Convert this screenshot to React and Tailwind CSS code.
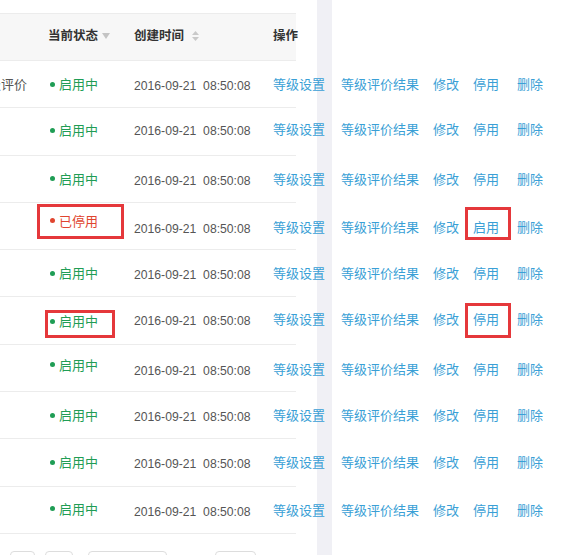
import React from "react";

const rows = [
  { on: true, lead: "级评价", st: "pt-[14px]", dt: "pt-[16px]" },
  { on: true, st: "pt-[13px]", dt: "pt-[14px]" },
  { on: true, st: "pt-[14px]", dt: "pt-[16px]" },
  { on: false, st: "pt-[9px]", dt: "pt-[17px]" },
  { on: true, st: "pt-[14px]", dt: "pt-[16px]" },
  { on: true, st: "pt-[15px]", dt: "pt-[15px]" },
  { on: true, st: "pt-[11px]", dt: "pt-[17px]" },
  { on: true, st: "pt-[14px]", dt: "pt-[16px]" },
  { on: true, st: "pt-[14px]", dt: "pt-[16px]" },
  { on: true, st: "pt-[13px]", dt: "pt-[16px]" },
];

const FilterIcon = () => (
  <svg width="8" height="6" viewBox="0 0 8 6" className="ml-[4px] mt-[1px] shrink-0">
    <path d="M0 0h8L4 6z" fill="#c4c4c4" />
  </svg>
);

const SortIcon = () => (
  <svg width="7" height="10" viewBox="0 0 7 10" className="ml-[8px] mt-[1px] shrink-0">
    <path d="M3.5 0L7 4H0z" fill="#c9c9c9" />
    <path d="M0 6h7L3.5 10z" fill="#c9c9c9" />
  </svg>
);

const Row = ({ row }) => (
  <div className="flex h-[47.3px] w-[296px] border-b border-[#ececec] text-[13px]">
    <div className="w-[48px] shrink-0 overflow-hidden pt-[14px] text-[#555]">
      {row.lead && <span className="block -ml-[12px] whitespace-nowrap">{row.lead}</span>}
    </div>
    <div className={`w-[86px] shrink-0 whitespace-nowrap ${row.st}`}>
      <span
        className={`flex items-center gap-[4px] pl-[2px] ${row.on ? "text-[#1f9d55]" : "text-[#e0452f]"}`}
      >
        <span className={`w-[5px] h-[5px] shrink-0 rounded-full ${row.on ? "bg-[#1f9d55]" : "bg-[#e0452f]"}`} />
        {row.on ? "启用中" : "已停用"}
      </span>
    </div>
    <div
      className={`w-[139px] shrink-0 whitespace-pre text-[12.2px] text-[#555] font-['Liberation_Sans','Noto_Sans_CJK_SC',sans-serif] ${row.dt}`}
    >
      {"2016-09-21  08:50:08"}
    </div>
    <div className={`flex shrink-0 -mt-[2px] whitespace-nowrap text-[#3a9fd6] ${row.dt}`}>
      <span className="w-[68px] shrink-0">等级设置</span>
      <span className="w-[92px] shrink-0">等级评价结果</span>
      <span className="w-[40px] shrink-0">修改</span>
      <span className="w-[44px] shrink-0">{row.on ? "停用" : "启用"}</span>
      <span className="shrink-0">删除</span>
    </div>
  </div>
);

export default function App() {
  return (
    <div className="relative w-[587px] h-[555px] overflow-hidden bg-white font-['Noto_Sans_CJK_SC','Liberation_Sans',sans-serif] leading-[18px]">
      <div className="flex h-full">
        <div className="relative z-10 w-[317px] shrink-0 pt-[13px]">
          <div className="flex items-center h-[48px] w-[296px] bg-[#f7f7f7] border-t border-b border-[#ececec] pb-[4px] text-[12.5px] font-bold text-[#333]">
            <div className="w-[48px] shrink-0" />
            <div className="w-[86px] shrink-0 flex items-center whitespace-nowrap">
              当前状态
              <FilterIcon />
            </div>
            <div className="w-[139px] shrink-0 flex items-center whitespace-nowrap">
              创建时间
              <SortIcon />
            </div>
            <div className="shrink-0 whitespace-nowrap">操作</div>
          </div>
          {rows.map((row, i) => (
            <Row key={i} row={row} />
          ))}
          <div className="flex mt-[17px] pl-[10px]">
            <div className="w-[25px] h-[28px] shrink-0 rounded border border-[#ddd]" />
            <div className="w-[28px] h-[28px] shrink-0 rounded border border-[#ddd] ml-[10px]" />
            <div className="w-[79px] h-[28px] shrink-0 rounded border border-[#ddd] ml-[15px]" />
            <div className="w-[41px] h-[28px] shrink-0 rounded border border-[#ddd] ml-[48px]" />
          </div>
        </div>
        <div className="w-[15px] shrink-0 h-full bg-[#f0f0f5]" />
        <div className="flex-1" />
      </div>

      {/* annotation boxes */}
      <div className="absolute z-20 left-[37px] top-[204px] w-[87px] h-[35px] border-[3px] border-[#e5383b]" />
      <div className="absolute z-20 left-[465px] top-[207px] w-[46px] h-[33px] border-[3px] border-[#e5383b]" />
      <div className="absolute z-20 left-[45px] top-[310px] w-[70px] h-[28px] border-[3px] border-[#e5383b]" />
      <div className="absolute z-20 left-[465px] top-[303px] w-[46px] h-[35px] border-[3px] border-[#e5383b]" />
    </div>
  );
}
